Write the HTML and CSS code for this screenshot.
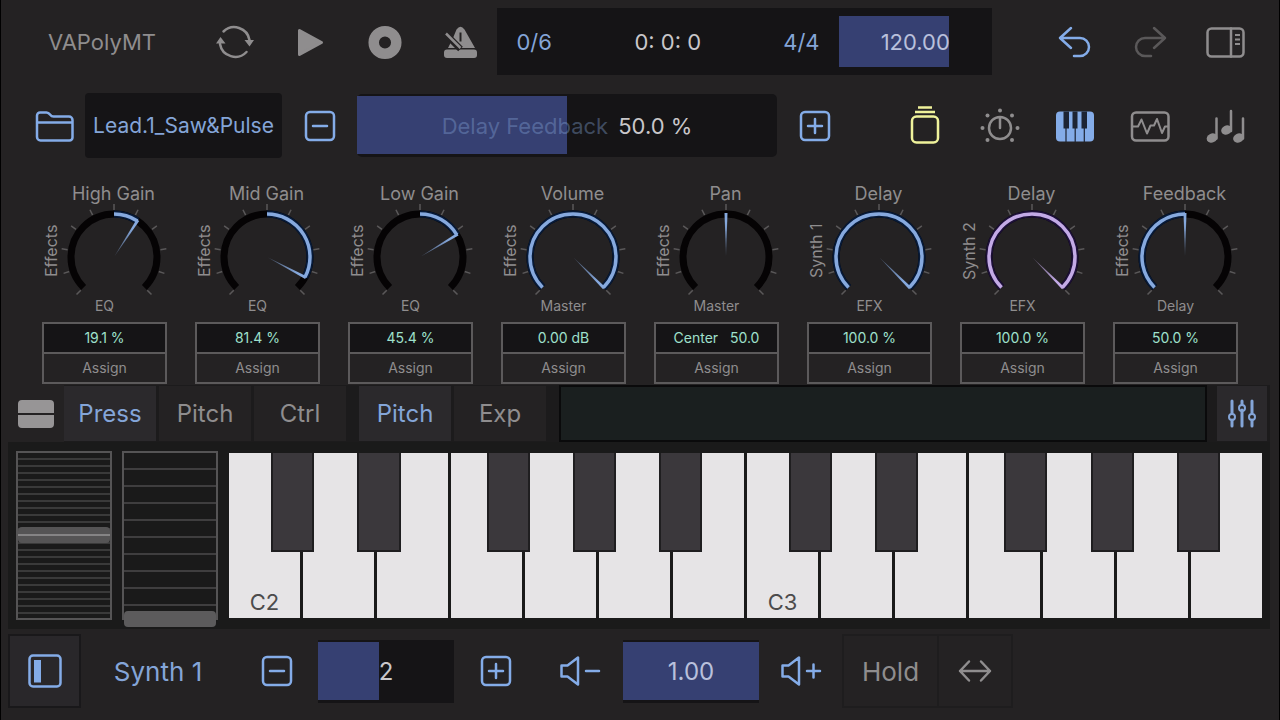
FILE: index.html
```
<!DOCTYPE html>
<html lang="en">
<head>
  <meta charset="UTF-8">
  <meta name="viewport" content="width=device-width, initial-scale=1.0">
  <title>VAPolyMT</title>
  <link rel="stylesheet" href="styles.css">
</head>
<body>
  <div class="app">

    <!-- Transport -->
    <header class="transport">
      <h1 class="title">VAPolyMT</h1>
      <button class="icon-btn" aria-label="Loop">
        <svg width="40" height="40" viewBox="0 0 40 40">
          <path class="line" d="M8.500 9.500A15.500 15.500 0 0 1 34.500 18M5 22A15.500 15.500 0 0 0 31.500 30"/>
          <path class="solid" d="M29.500 18h9.500l-4.500 6.500zM1 21.500h9.500l-5-6.500z"/>
        </svg>
      </button>
      <button class="icon-btn" aria-label="Play">
        <svg width="40" height="40" viewBox="0 0 40 40">
          <path class="solid round" d="M9.500 8.500v24l22-12z"/>
        </svg>
      </button>
      <button class="icon-btn" aria-label="Record">
        <svg width="40" height="40" viewBox="0 0 40 40">
          <circle cx="20" cy="20.500" r="11.300" fill="none" stroke="currentColor" stroke-width="10.500"/>
        </svg>
      </button>
      <button class="icon-btn" aria-label="Metronome">
        <svg width="40" height="40" viewBox="0 0 40 40">
          <rect class="solid" x="4" y="27.500" width="33" height="8.500" rx="3"/>
          <path class="solid" d="M16.500 7.500Q20.500 2 24.500 7.500L35 26H8L13 16z"/>
          <path d="M20.500 10.500v9" stroke="#242223" stroke-width="2"/>
          <path d="M4 10.500L20.500 27" stroke="#242223" stroke-width="6.500"/>
          <path d="M6 11.500L20.500 26" stroke="currentColor" stroke-width="2.500"/>
        </svg>
      </button>
      <div class="display">
        <button class="display-link">0/6</button>
        <output class="position">0: 0: 0</output>
        <button class="display-link">4/4</button>
        <label class="value-bar tempo">
          <span class="bar-fill" style="width: 72%"></span>
          <span class="bar-text pale">120.00</span>
          <input type="range" min="0" max="100" value="72" aria-label="Tempo">
        </label>
      </div>
      <div class="icon-group">
        <button class="icon-btn blue" aria-label="Undo">
          <svg width="40" height="40" viewBox="0 0 40 40">
            <path class="line" d="M16 6L5 16l11 10M5 16h20a9 9 0 0 1 0 18h-6"/>
          </svg>
        </button>
        <button class="icon-btn dim" aria-label="Redo">
          <svg width="40" height="40" viewBox="0 0 40 40">
            <path class="line" d="M24 6l11 10-11 10M35 16H15a9 9 0 0 0 0 18h6"/>
          </svg>
        </button>
        <button class="icon-btn" aria-label="Side panel">
          <svg width="40" height="40" viewBox="0 0 40 40">
            <rect class="line" x="2.500" y="6.500" width="36" height="28" rx="4"/>
            <path class="line" d="M26 6.500v28"/>
            <path d="M30 13h5M30 17.500h5M30 22h5" stroke="currentColor" stroke-width="1.800"/>
          </svg>
        </button>
      </div>
    </header>

    <!-- Preset and last touched parameter -->
    <section class="preset-row">
      <button class="icon-btn folder blue" aria-label="Presets">
        <svg width="40" height="40" viewBox="0 0 40 40">
          <path class="line" d="M2 31V9.500a3 3 0 0 1 3-3h6.500q2 0 3.500 2t3.500 2H34a3.500 3.500 0 0 1 3.500 3.500v17.500a3 3 0 0 1-3 3H5.500A3.500 3.500 0 0 1 2 31zM2 16.500h35.500"/>
        </svg>
      </button>
      <button class="preset-name">Lead.1_Saw&amp;Pulse</button>
      <button class="icon-btn blue" aria-label="Previous">
        <svg width="40" height="40" viewBox="0 0 40 40">
          <rect class="line" x="6" y="6" width="28" height="28" rx="4"/>
          <path class="line" d="M13 20h14"/>
        </svg>
      </button>
      <label class="value-bar param">
        <span class="bar-fill" style="width: 50%"></span>
        <span class="bar-text"><span class="param-name">Delay Feedback</span> 50.0 %</span>
        <input type="range" min="0" max="100" value="50" aria-label="Delay Feedback">
      </label>
      <button class="icon-btn blue" aria-label="Next">
        <svg width="40" height="40" viewBox="0 0 40 40">
          <rect class="line" x="6" y="6" width="28" height="28" rx="4"/>
          <path class="line" d="M13 20h14M20 13v14"/>
        </svg>
      </button>
      <nav class="icon-group views">
        <button class="icon-btn yellow" aria-label="Stack">
          <svg width="40" height="40" viewBox="0 0 40 40">
            <rect class="line" x="7" y="10.500" width="26" height="26" rx="4.500"/>
            <path d="M13 1.500h14M10 6h20" stroke="currentColor" stroke-width="2.500"/>
          </svg>
        </button>
        <button class="icon-btn" aria-label="Knobs">
          <svg width="40" height="40" viewBox="0 0 40 40">
            <circle class="line" cx="20" cy="22" r="11"/>
            <path class="line" d="M20 12v10"/>
            <g fill="currentColor">
              <circle cx="20" cy="4.500" r="2"/><circle cx="7.500" cy="9.500" r="2"/><circle cx="32" cy="9.500" r="2"/>
              <circle cx="2.500" cy="22" r="2"/><circle cx="37.500" cy="22" r="2"/>
              <circle cx="7.500" cy="34" r="2"/><circle cx="32" cy="34" r="2"/>
            </g>
          </svg>
        </button>
        <button class="icon-btn blue" aria-label="Keyboard">
          <svg width="40" height="40" viewBox="0 0 40 40">
            <rect x="1" y="5.500" width="38" height="30" rx="4" fill="#84ace8"/>
            <path d="M8.500 5.500h5.500v17h-5.500zM17.500 5.500h5v17h-5zM26.500 5.500h5.500v17h-5.500z" fill="#1d2433"/>
            <path d="M11 22v14M20.200 22v14M29.300 22v14" stroke="#1d2433" stroke-width="1.200"/>
          </svg>
        </button>
        <button class="icon-btn" aria-label="Waveform">
          <svg width="40" height="40" viewBox="0 0 40 40">
            <rect class="line" x="2" y="6.500" width="36.500" height="28" rx="4"/>
            <path d="M2 20.500h6l3.500-7 5.500 14 3.500-8h3.500l3-6.500 5 14 3-6.500h3.500" fill="none" stroke="currentColor" stroke-width="2" stroke-linejoin="round"/>
          </svg>
        </button>
        <button class="icon-btn" aria-label="Sequencer">
          <svg width="40" height="40" viewBox="0 0 40 40">
            <path class="line" d="M11.500 12.500v20M26 5v20M38 12.500v20"/>
            <ellipse class="solid" cx="7" cy="32" rx="5.500" ry="4.500" transform="rotate(-25 7 32)"/>
            <ellipse class="solid" cx="21.500" cy="24" rx="5.500" ry="4.500" transform="rotate(-25 21.500 24)"/>
            <ellipse class="solid" cx="33.500" cy="32" rx="5.500" ry="4.500" transform="rotate(-25 33.500 32)"/>
          </svg>
        </button>
      </nav>
    </section>

    <!-- Knobs, filled by script.js -->
    <section class="knobs" id="knobs"></section>

    <!-- Keyboard options -->
    <section class="options">
      <button class="collapse" aria-label="Split keyboard">
        <svg width="38" height="30" viewBox="0 0 38 30">
          <path fill="#979596" d="M1 14V5a4 4 0 0 1 4-4h28a4 4 0 0 1 4 4v9zM1 16h36v9a4 4 0 0 1-4 4H5a4 4 0 0 1-4-4z"/>
        </svg>
      </button>
      <div class="tabs">
        <button class="tab active">Press</button>
        <button class="tab">Pitch</button>
        <button class="tab">Ctrl</button>
      </div>
      <div class="tabs">
        <button class="tab active">Pitch</button>
        <button class="tab">Exp</button>
      </div>
      <div class="ribbon"></div>
      <button class="mixer" aria-label="Key settings">
        <svg width="32" height="32" viewBox="0 0 32 32">
          <path d="M6 3v12M6 22v6M16 3v3M16 12v16M26 3v12M26 22v6" stroke="currentColor" stroke-width="3" stroke-linecap="round"/>
          <g fill="none" stroke="currentColor" stroke-width="2">
            <circle cx="6" cy="19" r="3"/><circle cx="16" cy="10" r="3"/><circle cx="26" cy="19" r="3"/>
          </g>
        </svg>
      </button>
    </section>

    <!-- Wheels and keys -->
    <section class="keyboard">
      <label class="wheel pitch-wheel">
        <span class="handle" style="bottom: 51%"></span>
        <input type="range" min="0" max="100" value="51" aria-label="Pitch wheel">
      </label>
      <label class="wheel mod-wheel">
        <span class="handle" style="bottom: 0%"></span>
        <input type="range" min="0" max="100" value="0" aria-label="Mod wheel">
      </label>
      <div class="keybed">
        <div class="white-keys" id="whiteKeys"></div>
        <div class="black-keys" id="blackKeys"></div>
      </div>
    </section>

    <!-- Bottom bar -->
    <footer class="bottom">
      <button class="panel-btn" aria-label="Left panel">
        <svg width="40" height="40" viewBox="0 0 40 40">
          <rect class="line" x="4.500" y="4.500" width="31" height="31" rx="3.500"/>
          <rect x="9" y="9" width="7" height="22.500" fill="#84ace8"/>
        </svg>
      </button>
      <button class="synth-name">Synth 1</button>
      <button class="icon-btn step blue" aria-label="Octave down">
        <svg width="40" height="40" viewBox="0 0 40 40">
          <rect class="line" x="6" y="6" width="28" height="28" rx="4"/>
          <path class="line" d="M13 20h14"/>
        </svg>
      </button>
      <label class="value-bar small">
        <span class="bar-fill" style="width: 45%"></span>
        <span class="bar-text">2</span>
        <input type="range" min="0" max="100" value="45" aria-label="Octave">
      </label>
      <button class="icon-btn step blue" aria-label="Octave up">
        <svg width="40" height="40" viewBox="0 0 40 40">
          <rect class="line" x="6" y="6" width="28" height="28" rx="4"/>
          <path class="line" d="M13 20h14M20 13v14"/>
        </svg>
      </button>
      <button class="icon-btn volume-down blue" aria-label="Volume down">
        <svg width="42" height="40" viewBox="0 0 42 40">
          <path class="line" d="M2.500 14.500h6l10.500-8v27l-10.500-8h-6zM27 20h13"/>
        </svg>
      </button>
      <label class="value-bar small">
        <span class="bar-fill" style="width: 100%"></span>
        <span class="bar-text pale">1.00</span>
        <input type="range" min="0" max="100" value="100" aria-label="Volume">
      </label>
      <button class="icon-btn step blue" aria-label="Volume up">
        <svg width="42" height="40" viewBox="0 0 42 40">
          <path class="line" d="M2.500 14.500h6l10.500-8v27l-10.500-8h-6zM27 20h13M33.500 13.500v13"/>
        </svg>
      </button>
      <button class="foot-btn hold">Hold</button>
      <button class="foot-btn" aria-label="Scroll keys">
        <svg width="40" height="40" viewBox="0 0 40 40">
          <path class="line" d="M5 20h30M14 10.500L5 20l9 9.500M26 10.500L35 20l-9 9.500"/>
        </svg>
      </button>
    </footer>
  </div>

  <script src="script.js"></script>
</body>
</html>
```
FILE: styles.css
```
* {
  box-sizing: border-box;
}
body {
  margin: 0;
  background: #242223;
  color: #8f8d8e;
  font-family: Inter, "Liberation Sans", sans-serif;
  font-size: 22px;
}
button {
  margin: 0;
  padding: 0;
  border: none;
  background: none;
  color: inherit;
  font: inherit;
  cursor: pointer;
}
svg {
  display: block;
}
.app {
  min-height: 100vh;
  padding-top: 8px;
  border-left: 1px solid #000;
  border-right: 1px solid #000;
}
.line {
  fill: none;
  stroke: currentColor;
  stroke-width: 2.5;
  stroke-linecap: round;
  stroke-linejoin: round;
}
.solid {
  fill: currentColor;
}
.round {
  stroke: currentColor;
  stroke-width: 3;
  stroke-linejoin: round;
}
.blue {
  color: #84ace8;
}
.yellow {
  color: #eff29b;
}
.icon-btn.dim {
  color: #5a5859;
}
.icon-btn {
  flex: none;
  width: 75px;
  height: 56px;
  display: flex;
  align-items: center;
  justify-content: center;
}
.icon-group {
  display: flex;
  flex: none;
}

/* bars that show a value */
.value-bar {
  position: relative;
  display: block;
  background: #151416;
}
.bar-fill {
  position: absolute;
  left: 0;
  top: 2px;
  bottom: 3px;
  background: #364072;
}
.bar-text {
  position: relative;
  display: flex;
  align-items: center;
  justify-content: center;
  gap: 10px;
  height: 100%;
  color: #c9c7ca;
}
.bar-text.pale {
  color: #b9c0dc;
}
.value-bar input,
.dial input,
.wheel input {
  position: absolute;
  inset: 0;
  width: 100%;
  height: 100%;
  margin: 0;
  opacity: 0;
  cursor: pointer;
}

/* transport */
.transport {
  display: flex;
  align-items: center;
  height: 67px;
  padding: 0 17px 0 6px;
}
.title {
  flex: none;
  width: 190px;
  margin: 0;
  font-size: 22px;
  font-weight: 400;
  text-align: center;
}
.display {
  flex: 1;
  display: flex;
  align-items: center;
  height: 100%;
  margin-right: 45px;
  background: #151416;
}
.display-link {
  flex: 0 0 15%;
  color: #84a5d8;
}
.position {
  flex: 0 0 39%;
  color: #c9c7ca;
  text-align: center;
}
.tempo {
  flex: 1;
  height: 56px;
}

/* preset row */
.preset-row {
  display: flex;
  align-items: center;
  height: 65px;
  margin-top: 18px;
  padding: 0 17px 0 23px;
}
.folder {
  width: 61px;
}
.preset-name {
  flex: none;
  width: 197px;
  height: 100%;
  border-radius: 4px;
  background: #151416;
  color: #84a5d8;
  font-size: 21px;
}
.param {
  flex: 1;
  height: 63px;
  border-radius: 5px;
}
.param-name {
  color: rgba(132, 165, 216, 0.4);
}
.views {
  margin-left: 35px;
}

/* knobs */
.knobs {
  display: grid;
  grid-template-columns: repeat(8, minmax(0, 1fr));
  gap: 28px;
  margin-top: 26px;
  padding: 0 41px;
}
.knob {
  display: grid;
  grid-template-columns: 18px minmax(0, 1fr);
  grid-template-rows: 20px 94px 16px;
}
.knob-name {
  grid-column: 2;
  margin: 0;
  font-size: 18px;
  font-weight: 400;
  line-height: 20px;
  text-align: center;
  white-space: nowrap;
}
.knob-part {
  writing-mode: vertical-rl;
  transform: rotate(180deg);
  font-size: 16px;
  line-height: 18px;
  text-align: center;
}
.dial {
  position: relative;
  display: flex;
  justify-content: center;
}
.dial svg {
  flex: none;
  overflow: visible;
}
.knob-group {
  grid-column: 1 / 3;
  font-size: 14px;
  line-height: 16px;
  text-align: center;
}
.knob-value,
.assign {
  grid-column: 1 / 3;
  height: 32px;
  border: 2px solid #5c5a5b;
  font-size: 14px;
  line-height: 28px;
  text-align: center;
}
.knob-value {
  margin-top: 8px;
  background: #151416;
  color: #9fe0cc;
  white-space: pre;
}
.assign {
  margin-top: -2px;
}

/* keyboard options */
.options {
  display: flex;
  height: 57px;
  margin: 1px 9px 0 7px;
  padding-right: 3px;
  background: #1c1b1c;
}
.collapse {
  flex: none;
  width: 56px;
  display: flex;
  align-items: center;
  justify-content: center;
  background: #242223;
}
.tabs {
  display: flex;
  gap: 3px;
  margin-right: 13px;
  padding: 1px 0;
}
.tab {
  width: 92px;
  background: #242223;
  font-size: 24px;
}
.tab.active {
  background: #2b292c;
  color: #84a5d8;
}
.ribbon {
  flex: 1;
  border: 2px solid #0a0a0b;
  background: #1a1f1f;
}
.mixer {
  width: 50px;
  margin: 1px 0 1px 10px;
  display: flex;
  align-items: center;
  justify-content: center;
  background: #2b292c;
  color: #84a5d8;
}

/* wheels and keys */
.keyboard {
  display: flex;
  height: 187px;
  margin: 0 9px 0 7px;
  padding: 9px 7px 9px 8px;
  background: #1a1a1a;
}
.wheel {
  position: relative;
  flex: none;
  width: 96px;
  margin-right: 10px;
  border: 2px solid #555455;
}
.pitch-wheel {
  background: repeating-linear-gradient(#1a1a1a 0 5px, #3a3a3a 5px 7px);
}
.mod-wheel {
  background: repeating-linear-gradient(#1a1a1a 0 15px, #3f3e3f 15px 17px);
}
.handle {
  position: absolute;
  left: 0;
  right: 0;
  height: 16px;
  margin-bottom: -9px;
  border-radius: 4px;
  background: linear-gradient(#555455 0 7px, #858485 7px 9px, #555455 9px);
}
.mod-wheel .handle {
  background: #5c5b5c;
}
.keybed {
  position: relative;
  flex: 1;
  margin: 2px 0;
}
.white-keys {
  display: flex;
  gap: 3px;
  height: 100%;
  padding: 0 1px;
}
.white-key {
  flex: 1;
  display: flex;
  align-items: flex-end;
  justify-content: center;
  padding-bottom: 3px;
  background: #e6e4e6;
  color: #4c4b4c;
}
/* one column for each semitone over two octaves */
.black-keys {
  position: absolute;
  inset: 0;
  display: grid;
  grid-template-columns: repeat(24, 1fr);
  height: 60%;
  pointer-events: none;
}
.black-key {
  border: 2px solid #1f1e20;
  border-top: none;
  background: #3b383c;
  pointer-events: auto;
}

/* bottom bar */
.bottom {
  display: flex;
  align-items: center;
  height: 74px;
  margin-top: 5px;
  padding-left: 7px;
  font-size: 26px;
}
.panel-btn {
  width: 73px;
  height: 100%;
  display: flex;
  align-items: center;
  justify-content: center;
  border: 2px solid #19181a;
  background: #29272a;
  color: #84ace8;
}
.synth-name {
  width: 154px;
  color: #84a5d8;
}
.step {
  width: 83px;
}
.volume-down {
  width: 86px;
}
.small {
  width: 136px;
  height: 63px;
  font-size: 24px;
}
.foot-btn {
  width: 76px;
  height: 100%;
  display: flex;
  align-items: center;
  justify-content: center;
  border: 2px solid #1e1d1e;
}
.hold {
  width: 97px;
  margin-right: -2px;
}
```
FILE: script.js
```
const knobs = [
  { name: 'High Gain', part: 'Effects', group: 'EQ', value: '19.1 %', angle: 33, from: 0 },
  { name: 'Mid Gain', part: 'Effects', group: 'EQ', value: '81.4 %', angle: 118, from: 0 },
  { name: 'Low Gain', part: 'Effects', group: 'EQ', value: '45.4 %', angle: 59, from: 0 },
  { name: 'Volume', part: 'Effects', group: 'Master', value: '0.00 dB', angle: 135, from: -135 },
  { name: 'Pan', part: 'Effects', group: 'Master', value: 'Center   50.0', angle: 0, from: 0 },
  { name: 'Delay', part: 'Synth 1', group: 'EFX', value: '100.0 %', angle: 135, from: -135 },
  { name: 'Delay', part: 'Synth 2', group: 'EFX', value: '100.0 %', angle: 135, from: -135, color: '#c3aae6' },
  { name: 'Feedback', part: 'Effects', group: 'Delay', value: '50.0 %', angle: 0, from: -135 }
];

const cx = 54;
const cy = 53;
const radius = 43;

// angle is in degrees, 0 points up
const point = (angle, r) => {
  const rad = angle * Math.PI / 180;
  return (cx + r * Math.sin(rad)).toFixed(2) + ' ' + (cy - r * Math.cos(rad)).toFixed(2);
};

const arc = (a, b) => {
  if (a === b) return '';
  const start = Math.min(a, b);
  const end = Math.max(a, b);
  const large = end - start > 180 ? 1 : 0;
  return `M${point(start, radius)}A${radius} ${radius} 0 ${large} 1 ${point(end, radius)}`;
};

const drawDial = (knob, angle, id) => {
  const color = knob.color || '#86a9de';
  const edge = knob.color ? '#1d1038' : '#071a38';
  let ticks = '';
  for (let a = -135; a <= 135; a += 27) {
    ticks += `M${point(a, 47)}L${point(a, 53)}`;
  }
  const value = arc(knob.from, angle);
  return `
    <defs>
      <linearGradient id="needle${id}" gradientUnits="userSpaceOnUse" x1="0" y1="${cy}" x2="0" y2="${cy - radius}">
        <stop offset="0" stop-color="${color}" stop-opacity="0.3"/>
        <stop offset="0.8" stop-color="${color}"/>
      </linearGradient>
    </defs>
    <path d="${ticks}" stroke="#5a5859" stroke-width="1.5"/>
    <path d="${arc(-135, 135)}" fill="none" stroke="#050304" stroke-width="7"/>
    <path d="${value}" fill="none" stroke="${edge}" stroke-width="7"/>
    <path d="${value}" fill="none" stroke="${color}" stroke-width="3.5"/>
    <path d="M${cx} ${cy - 1}L${cx - 1.5} ${cy - 44}h3z" fill="url(#needle${id})" transform="rotate(${angle} ${cx} ${cy})"/>`;
};

const knobBox = document.getElementById('knobs');
knobs.forEach((knob, i) => {
  const item = document.createElement('div');
  item.className = 'knob';
  item.innerHTML = `
    <h2 class="knob-name">${knob.name}</h2>
    <span class="knob-part">${knob.part}</span>
    <label class="dial">
      <svg width="108" height="95" viewBox="0 0 108 95">${drawDial(knob, knob.angle, i)}</svg>
      <input type="range" min="-135" max="135" value="${knob.angle}" aria-label="${knob.part} ${knob.name}">
    </label>
    <span class="knob-group">${knob.group}</span>
    <output class="knob-value">${knob.value}</output>
    <button class="assign">Assign</button>`;
  const svg = item.querySelector('svg');
  item.querySelector('input').addEventListener('input', e => {
    svg.innerHTML = drawDial(knob, Number(e.target.value), i);
  });
  knobBox.appendChild(item);
});

// Two octaves from C2
const whiteKeys = document.getElementById('whiteKeys');
for (let i = 0; i < 14; i++) {
  const key = document.createElement('button');
  const note = 'CDEFGAB'[i % 7] + (2 + Math.floor(i / 7));
  key.className = 'white-key';
  key.setAttribute('aria-label', note);
  if (i % 7 === 0) key.textContent = note;
  whiteKeys.appendChild(key);
}

const blackKeys = document.getElementById('blackKeys');
[2, 4, 7, 9, 11, 14, 16, 19, 21, 23].forEach(column => {
  const key = document.createElement('button');
  key.className = 'black-key';
  key.style.gridColumn = column;
  key.setAttribute('aria-label', 'Black key ' + column);
  blackKeys.appendChild(key);
});

document.querySelectorAll('.value-bar').forEach(bar => {
  bar.querySelector('input').addEventListener('input', e => {
    bar.querySelector('.bar-fill').style.width = e.target.value + '%';
  });
});
```
